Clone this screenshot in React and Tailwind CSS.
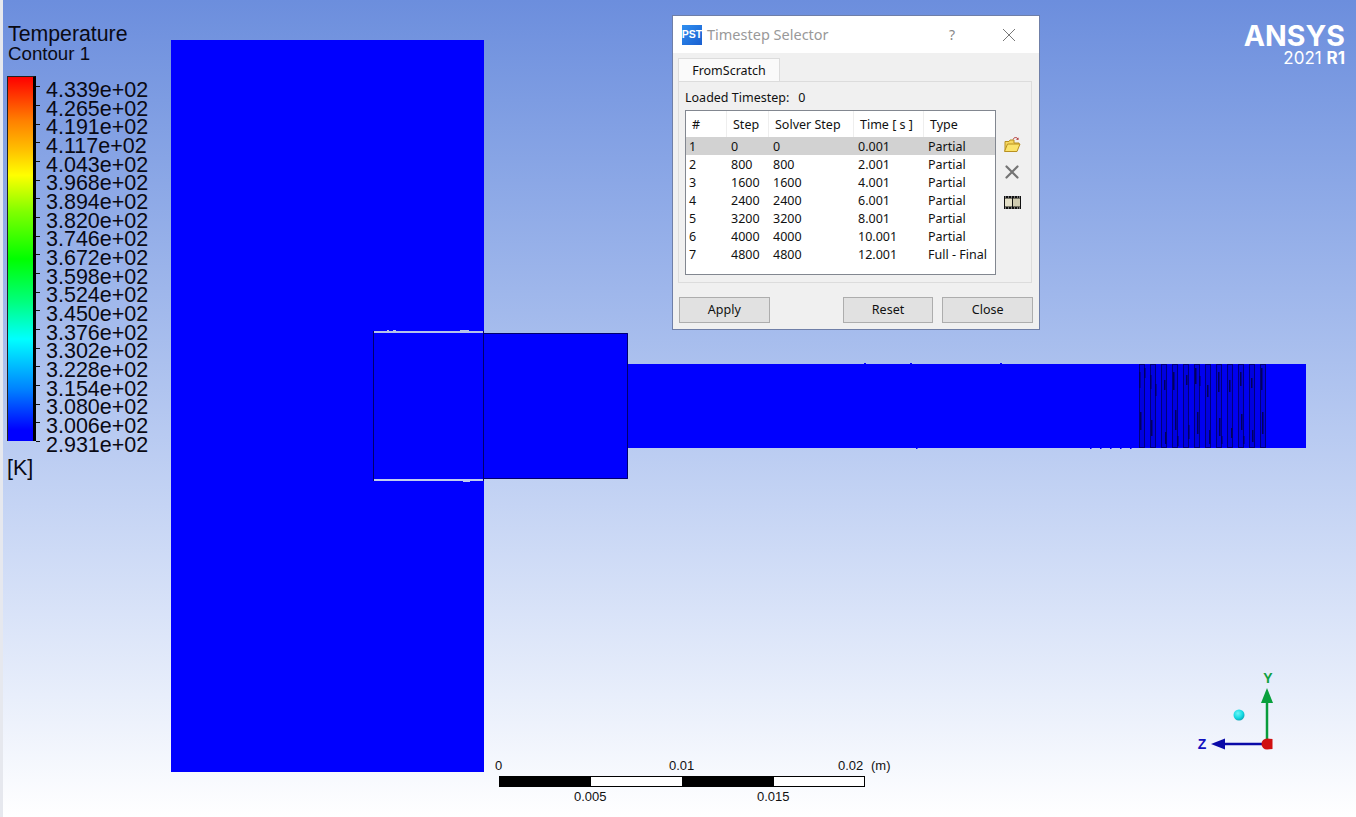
import React from "react";

const legend = ["4.339e+02","4.265e+02","4.191e+02","4.117e+02","4.043e+02","3.968e+02","3.894e+02","3.820e+02","3.746e+02","3.672e+02","3.598e+02","3.524e+02","3.450e+02","3.376e+02","3.302e+02","3.228e+02","3.154e+02","3.080e+02","3.006e+02","2.931e+02"];

const rows = [
  ["1","0","0","0.001","Partial"],
  ["2","800","800","2.001","Partial"],
  ["3","1600","1600","4.001","Partial"],
  ["4","2400","2400","6.001","Partial"],
  ["5","3200","3200","8.001","Partial"],
  ["6","4000","4000","10.001","Partial"],
  ["7","4800","4800","12.001","Full - Final"],
];

const threadXs = [1139,1150,1161,1172,1183,1194,1205,1216,1227,1238,1249,1260];
const specks = [
  [1139,372,16],[1140,412,18],[1144,368,10],[1150,375,14],[1151,420,16],[1155,384,12],
  [1164,380,10],[1165,432,12],[1173,372,18],[1175,410,20],[1186,375,10],[1188,425,14],
  [1195,368,16],[1197,412,22],[1207,385,12],[1209,430,14],[1218,372,20],[1219,418,18],
  [1229,380,12],[1231,428,10],[1240,372,14],[1241,414,16],[1251,378,10],[1252,430,12],
  [1261,368,22],[1262,412,22],[1177,436,10],[1199,376,10],[1221,436,8],[1243,436,8],
];

function Geometry() {
  return (
    <svg className="absolute inset-0" width="1356" height="817" viewBox="0 0 1356 817">
      <defs>
        <radialGradient id="cyanBall" cx="0.4" cy="0.35" r="0.7">
          <stop offset="0" stopColor="#6ff5f5" />
          <stop offset="0.6" stopColor="#14dbe4" />
          <stop offset="1" stopColor="#0aa0b0" />
        </radialGradient>
      </defs>
      <rect x="171" y="40" width="313" height="732" fill="#0000ff" />
      <rect x="484" y="333" width="144" height="146" fill="#0000ff" />
      <path d="M484 333.5H627.5V478.5H484" fill="none" stroke="#00006e" strokeWidth="1" />
      <rect x="628" y="364" width="678" height="84" fill="#0000ff" />
      <rect x="373" y="331" width="111" height="2" fill="#b4c2ea" />
      <rect x="373" y="479" width="111" height="2" fill="#c0cdf0" />
      <rect x="387" y="330" width="2" height="1" fill="#b4c2ea" />
      <rect x="393" y="330" width="3" height="1" fill="#b4c2ea" />
      <rect x="460" y="330" width="9" height="1" fill="#b4c2ea" />
      <rect x="463" y="481" width="7" height="1" fill="#c0cdf0" />
      <path d="M373.5 331V481M483.5 331V481" stroke="#00006e" strokeWidth="1" fill="none" />
      <g fill="#0000e0" stroke="#00007a" strokeWidth="1">
        {threadXs.map((x) => (
          <rect key={x} x={x + 0.5} y="364.5" width="5" height="83" />
        ))}
      </g>
      <g fill="#0000f0">
        {threadXs.slice(0, 11).map((x) => (
          <rect key={x} x={x + 6} y="365" width="5" height="82" />
        ))}
      </g>
      <g fill="#000060">
        {specks.map(([x, y, h], i) => (
          <rect key={i} x={x} y={y} width="1.5" height={h} />
        ))}
      </g>
      <g fill="#0000ff">
        {[864,910,1000].map((x) => <rect key={x} x={x} y="363" width="2" height="1" />)}
        {[916,1090,1100,1110,1120,1130].map((x) => <rect key={x} x={x} y="448" width="1.5" height="1" />)}
      </g>
      <circle cx="1239" cy="715" r="5.5" fill="url(#cyanBall)" />
      <path d="M1267 744V700" stroke="#089c3c" strokeWidth="2.5" />
      <path d="M1267 688L1273 703H1261Z" fill="#08a03c" />
      <path d="M1267 744H1222" stroke="#0a0aa8" strokeWidth="2.5" />
      <path d="M1211 744L1225 738.5V749.5Z" fill="#0a0aa8" />
      <path d="M1267 738.5A5.5 5.5 0 1 0 1267 749.5L1272.5 749V739Z" fill="#d01010" />
      <text x="1268" y="683" textAnchor="middle" fill="#10a040" fontFamily="Liberation Sans, sans-serif" fontWeight="700" fontSize="14">Y</text>
      <text x="1202" y="749" textAnchor="middle" fill="#1010c0" fontFamily="Liberation Sans, sans-serif" fontWeight="700" fontSize="14">Z</text>
    </svg>
  );
}

function Legend() {
  return (
    <div className="absolute left-[8px] top-[22px] font-['Liberation_Sans',sans-serif] text-[#0a0a14]">
      <div className="text-[21.3px] leading-[24px]">Temperature</div>
      <div className="text-[18.7px] leading-[17px] -mt-[1px]">Contour 1</div>
      <div className="flex mt-[14px] -ml-[1px]">
        <div className="w-[29px] h-[365px] border-t border-l border-[#222] border-r-[3px] border-r-black bg-[linear-gradient(to_bottom,#ff0000_0%,#ff8000_12%,#ffc000_20%,#ffff00_27%,#80ff00_37%,#00ff00_50%,#00ff80_62%,#00ffff_72%,#0080ff_86%,#0000ff_97%)]" />
        <div className="flex flex-col ml-[3px] pt-[5px]">
          {legend.map((t) => (
            <div key={t} className="flex items-center h-[18.68px]">
              <div className="w-[4px] h-px bg-[#111] mr-[3px] -ml-[3px] -mt-[7px]" />
              <span className="text-[21.5px] leading-[18.68px] pl-[3px]">{t}</span>
            </div>
          ))}
          <div className="text-[21.5px] -ml-[32px] mt-[2px] leading-[24px]">[K]</div>
        </div>
      </div>
    </div>
  );
}

function ScaleBar() {
  return (
    <div className="absolute left-[495px] top-[758px] w-[400px] text-[13px] leading-[16px] text-[#111] font-['Liberation_Sans',sans-serif]">
      <div className="flex">
        <span className="w-[174px]">0</span>
        <span className="w-[169px]">0.01</span>
        <span className="w-[33px]">0.02</span>
        <span>(m)</span>
      </div>
      <div className="flex w-[366px] h-[11px] ml-[4px] mt-[2px] border border-black bg-white">
        <div className="w-[91px] bg-black" />
        <div className="w-[91px]" />
        <div className="w-[92px] bg-black" />
      </div>
      <div className="flex pl-[79px] mt-[2px]">
        <span className="w-[183px]">0.005</span>
        <span>0.015</span>
      </div>
    </div>
  );
}

function Logo() {
  return (
    <div className="absolute right-[11px] top-[21px] text-right text-white leading-none font-['Inter',sans-serif]">
      <div className="text-[28.5px] font-bold leading-[30px]">ANSYS</div>
      <div className="text-[17px] leading-[15px] font-normal">2021 <span className="font-bold">R1</span></div>
    </div>
  );
}

function FolderIcon() {
  return (
    <svg width="18" height="18" viewBox="0 0 18 18">
      <path d="M10 3.5C11 1 14 1 15 3" fill="none" stroke="#b03030" strokeWidth="1" />
      <path d="M15.5 1.5L15.5 4L13 3.5Z" fill="#b03030" />
      <path d="M2 15V5.5H6L7 4H11V7H16V8" fill="#f6d860" stroke="#b89020" strokeWidth="1" />
      <path d="M1.5 15.5L4.5 8H17L14 15.5Z" fill="#fbe36a" stroke="#b89020" strokeWidth="1" />
    </svg>
  );
}

function CrossIcon() {
  return (
    <svg width="16" height="16" viewBox="0 0 16 16">
      <path d="M2.5 2.5L13.5 13.5M13.5 2.5L2.5 13.5" stroke="#747474" strokeWidth="2.2" strokeLinecap="round" />
    </svg>
  );
}

function FilmIcon() {
  return (
    <svg width="17" height="13" viewBox="0 0 17 13">
      <rect x="0" y="0" width="17" height="13" fill="#111" />
      <rect x="1" y="2.5" width="7" height="8" fill="#e4e0c8" />
      <rect x="9" y="2.5" width="7" height="8" fill="#cfcbb0" />
      <g fill="#ddd">
        {[1,4,7,10,13,15].map((x) => (
          <React.Fragment key={x}>
            <rect x={x} y="0.5" width="1" height="1" />
            <rect x={x} y="11.5" width="1" height="1" />
          </React.Fragment>
        ))}
      </g>
    </svg>
  );
}

function Btn({ children, className = "" }) {
  return (
    <button className={"w-[91px] h-[26px] pt-px bg-[#e1e1e1] border border-[#adadad] text-[12.5px] text-[#111] " + className}>
      {children}
    </button>
  );
}

function Dialog() {
  const cols = "grid grid-cols-[41px_42px_85px_70px_1fr]";
  return (
    <div className="absolute left-[672px] top-[15px] w-[368px] h-[315px] flex flex-col border border-[#6f7fa8] bg-[#f0f0f0] font-['Noto_Sans',sans-serif] text-[12.5px] text-[#111]">
      <div className="h-[37px] bg-white flex items-center pl-[9px] shrink-0">
        <div className="w-[20px] h-[20px] bg-[linear-gradient(135deg,#2f8ff0,#1a5fd0)] text-white text-[10.5px] font-bold flex items-center justify-center font-['Liberation_Sans',sans-serif]">PST</div>
        <span className="ml-[5px] text-[14.5px] text-[#999] w-[242px]">Timestep Selector</span>
        <span className="text-[14px] text-[#888] w-[53px]">?</span>
        <svg width="14" height="14" viewBox="0 0 14 14"><path d="M1 1L13 13M13 1L1 13" stroke="#777" strokeWidth="1" /></svg>
      </div>
      <div className="px-[5px] pt-[5px] flex-1 flex flex-col">
        <div className="flex">
          <div className="w-[102px] h-[24px] pt-[2px] bg-[#fafafa] border border-b-0 border-[#dcdcdc] flex items-center justify-center">FromScratch</div>
        </div>
        <div className="w-[354px] h-[202px] -mt-px border border-[#dcdcdc] bg-[#f0f0f0] pl-[6px] pt-[7px]">
          <div className="h-[20px] leading-[17px]">Loaded Timestep:<span className="ml-[9px]">0</span></div>
          <div className="flex mt-[1px]">
            <div className="w-[311px] h-[165px] border border-[#828790] bg-white">
              <div className={cols + " h-[26px] items-center"}>
                {["#","Step","Solver Step","Time [ s ]","Type"].map((h, i) => (
                  <div key={h} className={"h-full flex items-center pl-[6px] pt-[2px] " + (i < 4 ? "border-r border-[#eeeeee]" : "")}>{h}</div>
                ))}
              </div>
              {rows.map((r, i) => (
                <div key={i} className={cols + " h-[18px] items-center " + (i === 0 ? "bg-[#d2d2d2]" : "")}>
                  {r.map((c, j) => (
                    <div key={j} className={"pt-[2px] leading-[16px] whitespace-nowrap " + (j === 0 ? "pl-[3px]" : "pl-[4px]")}>{c}</div>
                  ))}
                </div>
              ))}
            </div>
            <div className="flex flex-col items-center pl-[7px] pt-[26px] gap-[10px]">
              <FolderIcon />
              <CrossIcon />
              <div className="mt-[6px]"><FilmIcon /></div>
            </div>
          </div>
        </div>
        <div className="flex mt-[14px] w-[354px]">
          <Btn className="ml-px">Apply</Btn>
          <Btn className="ml-[73px]">Reset</Btn>
          <Btn className="ml-[8px] translate-x-px">Close</Btn>
        </div>
      </div>
    </div>
  );
}

export default function App() {
  return (
    <div className="w-[1356px] h-[817px] overflow-hidden flex bg-white">
      <div className="w-[3px] h-full bg-[#e6e8ee] shrink-0" />
      <div className="flex-1 h-full bg-linear-to-b from-[#6c8edd] to-white" />
      <div className="absolute inset-0">
        <Geometry />
        <Legend />
        <ScaleBar />
        <Logo />
        <Dialog />
      </div>
    </div>
  );
}
